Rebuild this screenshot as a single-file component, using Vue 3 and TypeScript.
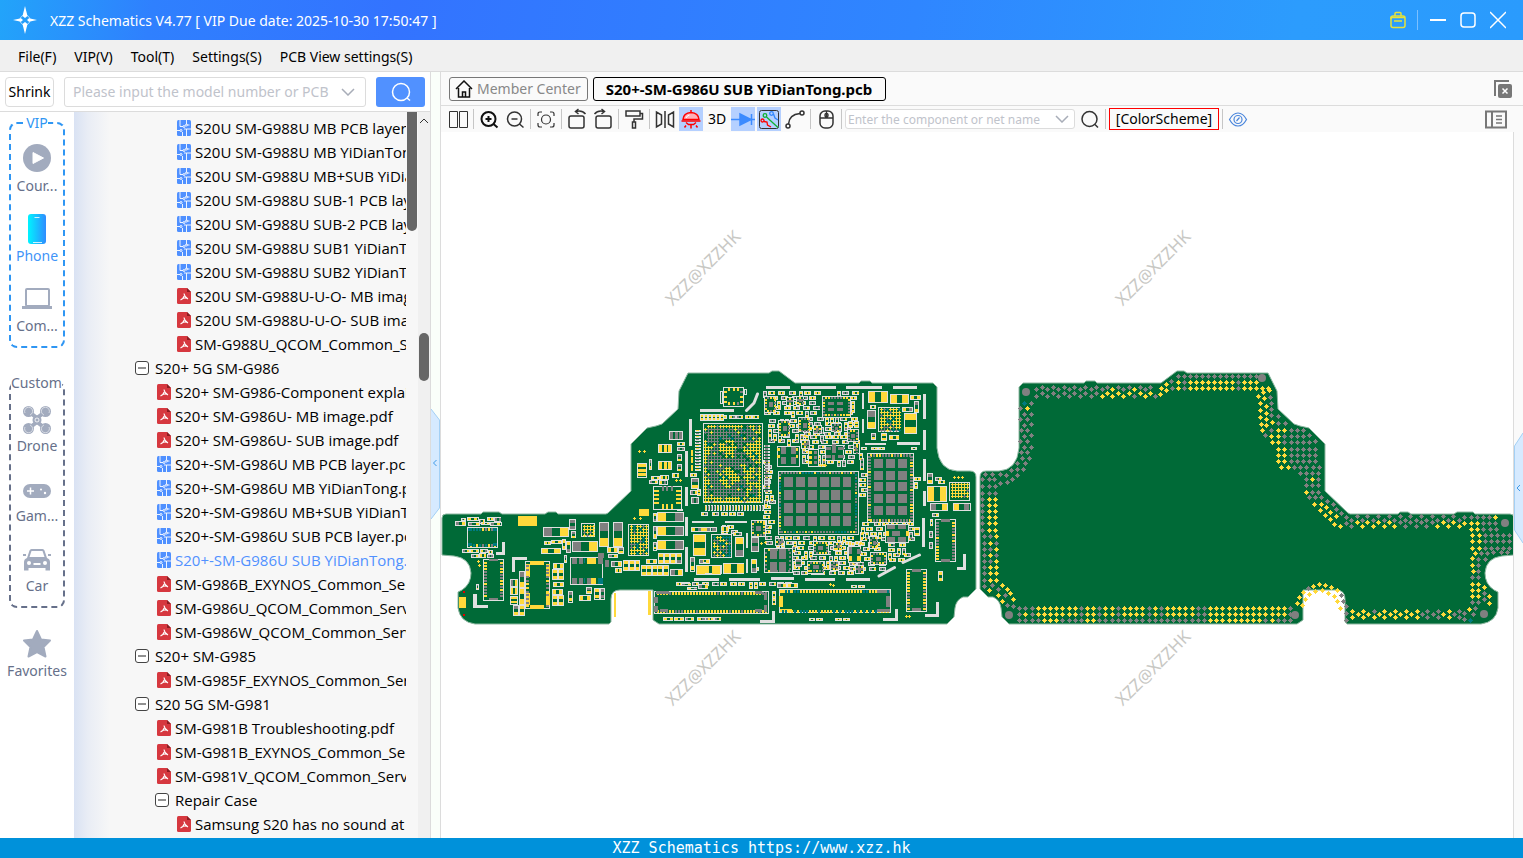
<script setup lang="ts">
import { ref } from 'vue'

type Ink = 'y' | 'g' | 't' | 'w'
interface TreeRow { kind: 'pcb' | 'pdf' | 'group'; depth: number; label: string; active?: boolean }
interface NavItem { icon: string; label: string; active?: boolean }

const keyword = ref('')
const netName = ref('')

const menus = ['File(F)', 'VIP(V)', 'Tool(T)', 'Settings(S)', 'PCB View settings(S)']
const vipItems: NavItem[] = [
  { icon: 'play', label: 'Cour...' },
  { icon: 'phone', label: 'Phone', active: true },
  { icon: 'laptop', label: 'Com...' },
]
const customItems: NavItem[] = [
  { icon: 'drone', label: 'Drone' },
  { icon: 'game', label: 'Gam...' },
  { icon: 'car', label: 'Car' },
]

const row = (kind: TreeRow['kind'], depth: number, label: string, active = false): TreeRow => ({ kind, depth, label, active })
const rows: TreeRow[] = [
  row('pcb', 3, 'S20U SM-G988U MB PCB layer.pcb'),
  row('pcb', 3, 'S20U SM-G988U MB YiDianTong.pcb'),
  row('pcb', 3, 'S20U SM-G988U MB+SUB YiDianTong.pcb'),
  row('pcb', 3, 'S20U SM-G988U SUB-1 PCB layer.pcb'),
  row('pcb', 3, 'S20U SM-G988U SUB-2 PCB layer.pcb'),
  row('pcb', 3, 'S20U SM-G988U SUB1 YiDianTong.pcb'),
  row('pcb', 3, 'S20U SM-G988U SUB2 YiDianTong.pcb'),
  row('pdf', 3, 'S20U SM-G988U-U-O- MB image.pdf'),
  row('pdf', 3, 'S20U SM-G988U-U-O- SUB image.pdf'),
  row('pdf', 3, 'SM-G988U_QCOM_Common_Service.pdf'),
  row('group', 1, 'S20+ 5G SM-G986'),
  row('pdf', 2, 'S20+ SM-G986-Component explain.pdf'),
  row('pdf', 2, 'S20+ SM-G986U- MB image.pdf'),
  row('pdf', 2, 'S20+ SM-G986U- SUB image.pdf'),
  row('pcb', 2, 'S20+-SM-G986U MB PCB layer.pcb'),
  row('pcb', 2, 'S20+-SM-G986U MB YiDianTong.pcb'),
  row('pcb', 2, 'S20+-SM-G986U MB+SUB YiDianTong.pcb'),
  row('pcb', 2, 'S20+-SM-G986U SUB PCB layer.pcb'),
  row('pcb', 2, 'S20+-SM-G986U SUB YiDianTong.pcb', true),
  row('pdf', 2, 'SM-G986B_EXYNOS_Common_Service.pdf'),
  row('pdf', 2, 'SM-G986U_QCOM_Common_Service.pdf'),
  row('pdf', 2, 'SM-G986W_QCOM_Common_Service.pdf'),
  row('group', 1, 'S20+ SM-G985'),
  row('pdf', 2, 'SM-G985F_EXYNOS_Common_Service.pdf'),
  row('group', 1, 'S20 5G SM-G981'),
  row('pdf', 2, 'SM-G981B Troubleshooting.pdf'),
  row('pdf', 2, 'SM-G981B_EXYNOS_Common_Service.pdf'),
  row('pdf', 2, 'SM-G981V_QCOM_Common_Service.pdf'),
  row('group', 2, 'Repair Case'),
  row('pdf', 3, 'Samsung S20 has no sound at all.pdf'),
]

const watermarks = [[703, 268], [1153, 268], [703, 668], [1153, 668]]

/* Board artwork. Part coordinates are in thirds of a drawing unit, relative to a section origin. */
const outline =
  'M442 518Q442 514 446 514H481L483 512H499L502 514H545L548 512H556L558 514H606L608 513L631 491V444L647 428L656 426L662 424L678 409L679 391L688 373H769L772 371H779L795 383H859L861 381H870L872 383H933L937 387V448Q939 470 957 471H970Q976 471 976 477V589L968 597H963Q956 600 955 608L954 617L947 624H659L653 620V590H620Q611 590 611 599V622L609 624H475Q460 622 458 608V592L462 590Q471 584 471 573Q470 558 454 556L442 555Z'

class Layer {
  ox = 0
  back = ''
  frame = ''
  ink: Record<Ink, string> = { w: '', y: '', g: '', t: '' }
  at(ox: number) { this.ox = ox; return this }
  px(x: number) { return this.ox + Math.round(x / 3) }
  py(y: number) { return 360 + Math.round(y / 3) }
  raw(c: Ink, x: number, y: number, w: number, h: number) {
    this.ink[c] += `M${x} ${y}h${w}v${h}h${-w}z`
  }
  rect(c: Ink, x: number, y: number, w: number, h: number) {
    this.raw(c, this.px(x), this.py(y), Math.max(1, Math.round(w / 3)), Math.max(1, Math.round(h / 3)))
  }
  bar(x: number, y: number, w: number, h: number) {
    this.rect('w', x, y, Math.max(w, 9), Math.max(h, 8))
  }
  box(x: number, y: number, w: number, h: number) {
    const s = `M${this.px(x) + 0.5} ${this.py(y) + 0.5}h${Math.round(w / 3) - 1}v${Math.round(h / 3) - 1}h${1 - Math.round(w / 3)}z`
    this.back += s
    this.frame += s
  }
  cap(x: number, y: number, w: number, h: number, c: string) {
    this.box(x, y, w, h)
    const [a, b] = c.split('') as Ink[]
    if (w >= h) {
      const p = Math.max(3, (w - 6) * 0.34)
      this.rect(a, x + 3, y + 3, p, h - 6)
      this.rect(b, x + w - 3 - p, y + 3, p, h - 6)
    } else {
      const p = Math.max(3, (h - 6) * 0.34)
      this.rect(a, x + 3, y + 3, w - 6, p)
      this.rect(b, x + 3, y + h - 3 - p, w - 6, p)
    }
  }
  plus(c: Ink, x: number, y: number) {
    const X = this.px(x), Y = this.py(y)
    this.raw(c, X - 1, Y, 3, 1)
    this.raw(c, X, Y - 1, 1, 3)
  }
  via(c: Ink, x: number, y: number) {
    const X = this.px(x), Y = this.py(y)
    this.raw(c, X - 1, Y - 1, 3, 3)
    this.raw(c, X - 2, Y, 5, 1)
    this.raw(c, X, Y - 2, 1, 5)
  }
}

let seed = 7
const rnd = () => (seed = (seed * 16807) % 2147483647) / 2147483647
const pick = (mix: string) => mix[Math.floor(rnd() * mix.length)] as Ink

function scatter(l: Layer, x: number, y: number, w: number, h: number) {
  for (let cy = y; cy < y + h - 10; cy += 15) {
    let cx = x + Math.floor(rnd() * 8)
    while (cx < x + w - 18) {
      const r = rnd()
      const c = r < 0.45 ? 'yy' : r < 0.75 ? 'gy' : r < 0.9 ? 'yg' : 'gg'
      if (rnd() < 0.3 && cy < y + h - 22) { l.cap(cx, cy, 12, 21, c); cx += 15 }
      else { l.cap(cx, cy, 21, 12, c); cx += 23 + Math.floor(rnd() * 12) }
    }
  }
}

function grid(l: Layer, x: number, y: number, w: number, h: number, step: number, mix: string) {
  l.box(x, y, w, h)
  for (let py = y + 7; py < y + h - 4; py += step)
    for (let px = x + 7; px < x + w - 4; px += step) l.plus(pick(mix), px, py)
}

function pins(l: Layer, x: number, y: number, w: number, h: number, step: number, size: number, sides: string, mix: string) {
  l.box(x, y, w, h)
  if (/[tb]/.test(sides))
    for (let p = x + step; p < x + w - step; p += step) {
      if (sides.includes('t')) l.rect(pick(mix), p, y + 3, 3 + size / 4, size)
      if (sides.includes('b')) l.rect(pick(mix), p, y + h - 3 - size, 3 + size / 4, size)
    }
  if (/[lr]/.test(sides))
    for (let p = y + step; p < y + h - step; p += step) {
      if (sides.includes('l')) l.rect(pick(mix), x + 3, p, size, 3 + size / 4)
      if (sides.includes('r')) l.rect(pick(mix), x + w - 3 - size, p, size, 3 + size / 4)
    }
}

const fine = new Layer().at(700)
const parts = new Layer()

for (const [x, y, w, h] of [
  [190, 92, 176, 84], [310, 172, 165, 62], [200, 178, 130, 84], [300, 225, 185, 98], [405, 92, 75, 80],
  [275, 527, 210, 117], [480, 487, 180, 66], [195, 527, 90, 40], [440, 545, 120, 92], [150, 620, 45, 22],
  [190, 330, 42, 200], [477, 280, 25, 140], [560, 550, 70, 60], [642, 350, 20, 150], [0, 165, 190, 22],
  [0, 455, 150, 22], [-80, 665, 380, 24], [60, 495, 60, 26], [190, 300, 42, 30],
]) scatter(fine, x, y, w, h)

/* Left half of the component side */
const a = parts.at(440)
const leftCaps: [number, number, number, number, string][] = [
  [46, 483, 32, 16, 'gy'], [80, 472, 36, 13, 'yy'], [84, 486, 36, 13, 'gy'], [117, 476, 18, 14, 'gy'], [122, 486, 28, 10, 'yy'],
  [140, 471, 21, 12, 'yy'], [162, 470, 22, 14, 'gg'], [150, 485, 35, 13, 'gy'], [64, 474, 14, 10, 'gy'],
  [66, 568, 24, 11, 'gy'], [90, 568, 28, 12, 'yy'], [120, 568, 24, 12, 'yg'], [145, 570, 15, 12, 'yy'], [92, 582, 24, 12, 'gy'], [118, 580, 22, 14, 'yy'], [140, 582, 20, 13, 'gg'],
  [309, 501, 78, 31, 'gy'], [388, 478, 22, 34, 'gg'], [312, 543, 20, 11, 'yy'], [334, 541, 32, 13, 'yy'], [303, 565, 60, 18, 'yy'],
  [366, 538, 12, 34, 'yy'], [379, 543, 14, 36, 'yg'], [392, 514, 14, 22, 'gy'], [395, 543, 78, 32, 'gy'], [372, 585, 10, 24, 'gy'],
  [478, 485, 31, 75, 'gy'], [520, 485, 31, 75, 'gy'], [501, 562, 32, 18, 'yy'], [503, 582, 30, 13, 'gy'], [533, 562, 18, 20, 'gy'],
  [513, 603, 33, 18, 'gy'], [550, 600, 18, 34, 'yy'], [567, 600, 18, 34, 'yy'], [584, 600, 16, 34, 'yy'], [526, 624, 20, 16, 'yy'],
  [602, 615, 18, 32, 'yy'], [619, 615, 18, 32, 'yy'], [636, 615, 18, 32, 'yy'], [652, 615, 18, 32, 'yy'], [669, 615, 18, 32, 'yy'],
  [655, 579, 18, 34, 'yy'], [673, 579, 18, 34, 'yy'], [690, 579, 18, 34, 'yy'], [708, 579, 18, 34, 'yg'], [690, 628, 38, 20, 'gy'], [619, 597, 34, 14, 'yy'],
  [339, 608, 32, 18, 'yy'], [337, 626, 17, 34, 'yy'], [354, 626, 17, 34, 'yy'], [339, 667, 32, 16, 'yy'], [337, 686, 34, 18, 'yy'], [337, 706, 17, 34, 'yy'], [354, 706, 17, 34, 'yy'],
  [385, 692, 16, 36, 'gy'], [417, 705, 36, 17, 'yy'], [438, 680, 18, 20, 'gy'], [462, 684, 17, 35, 'yy'], [479, 684, 15, 35, 'gg'],
  [210, 656, 24, 24, 'gy'], [210, 682, 24, 24, 'yy'], [210, 708, 24, 26, 'yy'], [237, 633, 17, 50, 'gy'], [237, 684, 17, 50, 'yy'], [219, 736, 18, 34, 'gy'], [237, 736, 18, 34, 'yy'], [108, 673, 8, 18, 'gy'],
  [652, 457, 80, 31, 'yg'], [652, 499, 80, 31, 'yg'], [652, 541, 80, 31, 'yg'], [640, 460, 11, 26, 'yg'], [640, 497, 11, 38, 'gy'], [640, 545, 11, 26, 'gy'],
  [711, 247, 23, 12, 'yy'], [711, 260, 23, 12, 'gg'], [711, 283, 14, 22, 'gy'], [711, 312, 14, 22, 'gy'], [627, 298, 9, 34, 'gy'], [696, 339, 22, 14, 'yy'],
  [632, 347, 28, 12, 'yy'], [660, 344, 26, 14, 'yy'], [628, 361, 28, 12, 'gy'], [657, 360, 26, 14, 'yg'],
  [750, 340, 20, 12, 'yy'], [754, 354, 24, 32, 'gy'], [750, 390, 22, 14, 'gy'], [772, 388, 12, 20, 'yy'], [754, 412, 24, 20, 'gg'],
  [754, 501, 34, 16, 'yg'], [790, 501, 40, 16, 'yg'], [760, 522, 39, 65, 'yy'], [750, 590, 14, 44, 'gy'], [776, 596, 34, 15, 'gy'], [768, 615, 76, 30, 'yy'],
  [724, 670, 30, 10, 'gy'], [742, 680, 30, 10, 'yg'], [775, 672, 30, 14, 'gy'], [670, 772, 30, 12, 'yy'], [702, 772, 30, 12, 'yy'], [734, 772, 28, 12, 'gy'], [774, 772, 22, 12, 'yg'], [796, 772, 28, 12, 'gy'],
]
leftCaps.forEach(c => a.cap(...c))

function tri(x: number, y: number, w: number, h: number, c: Ink, upright: boolean) {
  parts.box(x, y, w, h)
  for (let i = 0; i < 3; i++)
    upright ? parts.rect(c, x + 3 + (i * (w - 3)) / 3, y + 3, 9, h - 6) : parts.rect(c, x + 3, y + 2 + (i * (h - 4)) / 3, w - 6, 9)
}
tri(688, 213, 43, 26, 'g', true)
tri(655, 253, 42, 28, 'y', true)
tri(655, 303, 42, 28, 'y', true)
tri(591, 310, 29, 45, 'y', false)

pins(a, 81, 500, 92, 62, 9, 8, 'tb', 'gyytg')
a.rect('t', 84, 503, 12, 8); a.rect('t', 84, 549, 12, 10); a.rect('t', 158, 503, 12, 8); a.rect('t', 158, 549, 12, 10)
pins(a, 130, 596, 64, 126, 9, 10, 'lr', 'ggyy')
a.rect('g', 147, 596, 28, 7); a.rect('g', 147, 713, 28, 7)
pins(a, 255, 604, 76, 145, 11, 10, 'lr', 'gyg')
a.rect('y', 257, 613, 12, 38); a.rect('y', 318, 613, 12, 38); a.rect('y', 257, 699, 12, 36); a.rect('y', 318, 699, 12, 36)
a.rect('y', 270, 604, 42, 12); a.rect('y', 270, 736, 42, 12)
a.box(391, 592, 100, 84)
for (const y of [594, 655]) {
  a.rect('g', 397, y, 15, 18); a.rect('g', 417, y, 12, 18); a.rect('t', 432, y, 4, 16)
  a.rect(y < 600 ? 'y' : 'g', 441, y, 12, 18); a.rect('y', 453, y, 15, 18); a.rect(y < 600 ? 'g' : 't', 474, y, 15, 18)
}
a.rect('g', 474, 579, 18, 14); a.rect('g', 495, 600, 12, 20)
pins(a, 640, 378, 86, 72, 12, 14, 'lr', 'y')
a.rect('g', 667, 378, 6, 15); a.rect('g', 679, 378, 6, 15); a.rect('g', 692, 378, 6, 15)
for (const x of [667, 679, 692]) a.rect('y', x, 432, 6, 14)
grid(a, 565, 492, 64, 95, 9, 'yyyyyytg')
grid(a, 424, 490, 42, 42, 9, 'yyyg')
a.rect('y', 234, 468, 57, 30); a.rect('y', 597, 447, 30, 20); a.rect('y', 57, 711, 21, 32)
a.rect('y', 522, 699, 6, 72); a.rect('y', 624, 693, 9, 72)
for (const [x, y] of [[598, 274], [613, 274], [709, 361], [721, 361], [583, 475], [601, 475], [115, 604], [118, 616]]) a.plus('y', x, y)
for (let y = 270; y < 330; y += 22) a.rect('y', 753, y, 6, 17)
for (let y = 210; y < 330; y += 9) { a.rect('w', 766, y, 18, 6); a.rect(pick('gyg'), 769, y, 9, 4) }
const leftBars: [number, number, number, number][] = [
  [748, 176, 8, 80], [736, 274, 8, 78], [736, 382, 8, 56], [736, 470, 8, 58], [736, 560, 8, 75], [761, 655, 74, 8],
  [187, 545, 8, 40], [169, 576, 26, 8], [216, 590, 9, 45], [216, 590, 44, 9], [99, 702, 11, 42], [99, 734, 45, 9],
]
leftBars.forEach(r => a.bar(...r))
a.rect('w', 757, 484, 65, 6); a.rect('w', 710, 446, 18, 6); a.rect('w', 724, 432, 4, 20)

/* Right half of the component side */
const b = parts.at(700)
pins(b, 70, 80, 63, 60, 14, 10, 'lrtb', 'yyg')
b.box(61, 93, 9, 38); b.box(133, 88, 9, 18)

/* Ball grid of the main package: rows of balls in coarse patches of signal and ground */
b.box(8, 190, 180, 240)
for (let y = 198; y < 426; y += 9)
  for (let x = 15; x < 184; x += 9) {
    const signal = Math.sin(x / 12 + 1) + Math.cos(y / 14) > 0.35
    const edge = x < 24 || x > 172 || y < 206 || y > 412
    const r = rnd()
    if (r < 0.03) b.plus('t', x, y)
    else if (r < 0.95) b.plus(edge || signal ? pick('yyyyyg') : pick('ggggggy'), x, y)
  }
for (let y = 254; y < 396; y += 9) { b.rect('w', 192, y, 18, 6); b.rect('g', 195, y, 8, 5) }
for (let x = 14; x < 188; x += 9) { b.rect('w', x, 436, 7, 17); b.rect(pick('ggy'), x + 2, 438, 4, 13) }
for (let x = 0; x < 72; x += 12) b.cap(x, 162, 13, 20, 'yy')

function qfn(x: number, y: number, w: number, h: number, mix = 'yg') {
  pins(b, x, y, w, h, 9, 6, 'lrtb', mix)
  b.rect('g', x + w * 0.34, y + h * 0.34, w * 0.32, h * 0.32)
}
qfn(193, 108, 37, 50); qfn(235, 180, 37, 50); qfn(295, 172, 37, 46); qfn(258, 112, 23, 26); qfn(289, 108, 25, 30)
qfn(339, 195, 26, 28); qfn(393, 190, 32, 28); qfn(303, 240, 28, 26); qfn(338, 543, 48, 42); qfn(322, 602, 52, 38)
qfn(510, 577, 50, 38); qfn(153, 480, 46, 50); qfn(226, 534, 28, 25); qfn(400, 545, 28, 28); qfn(389, 604, 28, 30); qfn(465, 616, 28, 26)
qfn(508, 528, 28, 40); qfn(458, 250, 20, 34); qfn(442, 208, 36, 38)
pins(b, 367, 107, 86, 65, 9, 6, 'lrtb', 'yyg')
for (const y of [127, 143]) for (const x of [385, 412]) b.rect('g', x, y, 18, 8)

pins(b, 233, 332, 243, 192, 9, 7, 'lrtb', 'ggggyt')
for (const y of [351, 390, 429, 467]) for (const x of [252, 288, 324, 360, 393, 429]) b.rect('g', x, y, x === 429 ? 24 : 27, 30)
pins(b, 502, 278, 140, 209, 9, 8, 'lrtb', 'gggyy')
for (const y of [297, 333, 367, 402, 438]) for (const x of [522, 558, 594]) b.rect('g', x, y, 27, 27)
pins(b, 192, 565, 86, 76, 12, 7, 'lrtb', 'gy')
for (const y of [567, 606]) for (const x of [210, 237]) b.rect('g', x, y, 21, 31)
b.box(230, 257, 68, 62)
for (const x of [242, 274]) { b.rect('g', x, 262, 15, 20); b.rect('g', x, 290, 15, 22) }
b.rect('y', 232, 264, 8, 10); b.rect('y', 232, 286, 8, 10); b.rect('y', 289, 264, 7, 10); b.rect('y', 289, 286, 7, 10)
b.box(376, 254, 58, 48)
b.rect('g', 397, 252, 11, 28); b.rect('g', 378, 262, 14, 8); b.rect('g', 413, 262, 18, 8); b.rect('g', 378, 284, 14, 8); b.rect('g', 413, 284, 18, 8); b.rect('g', 397, 286, 10, 16)
b.box(323, 266, 32, 54)
for (const y of [272, 288, 304]) { b.rect('y', 326, y, 9, 9); b.rect('g', 342, y, 9, 9) }
b.box(445, 558, 40, 50)
b.rect('g', 448, 560, 10, 22); b.rect('y', 448, 588, 10, 14); b.rect('g', 470, 568, 12, 16); b.rect('y', 470, 588, 12, 14)
b.box(555, 492, 72, 58)
for (const x of [560, 594]) { b.rect('g', x, 494, 24, 12); b.rect('g', x, 532, 24, 14) }
b.rect('g', 576, 512, 24, 15); b.rect('y', 557, 512, 8, 15); b.rect('y', 617, 512, 8, 15)

grid(b, 535, 140, 66, 75, 9, 'yyygt')
grid(b, 748, 366, 64, 56, 9, 'yyyyg')
grid(b, 34, 523, 64, 73, 9, 'yyggt')
const rightCaps: [number, number, number, number, string][] = [
  [504, 94, 60, 36, 'yy'], [570, 102, 58, 29, 'yy'], [630, 106, 34, 14, 'yy'], [502, 150, 26, 56, 'gy'], [613, 160, 40, 63, 'yy'], [642, 123, 16, 36, 'gy'],
  [606, 140, 32, 14, 'yg'], [510, 135, 18, 12, 'yy'], [543, 220, 18, 24, 'yy'], [568, 224, 30, 14, 'yy'], [512, 218, 14, 20, 'gy'],
  [445, 184, 16, 20, 'yy'], [462, 184, 16, 20, 'yy'], [484, 262, 18, 10, 'yy'], [514, 262, 20, 10, 'yy'], [534, 262, 20, 10, 'yy'], [634, 262, 19, 10, 'yy'],
  [682, 377, 61, 48, 'yy'], [682, 340, 19, 34, 'gy'], [704, 350, 22, 12, 'gy'], [714, 361, 22, 12, 'yy'], [690, 430, 54, 25, 'gy'], [758, 430, 54, 25, 'yg'], [696, 459, 20, 11, 'gy'],
  [690, 478, 9, 22, 'yy'], [688, 512, 11, 22, 'gg'], [688, 545, 11, 21, 'gg'], [714, 633, 16, 31, 'yy'], [643, 500, 18, 28, 'yy'],
  [104, 530, 28, 60, 'yg'], [152, 530, 23, 46, 'gg'], [5, 616, 59, 26, 'yy'], [69, 608, 64, 34, 'yy'], [0, 502, 32, 14, 'yg'], [36, 502, 16, 14, 'yg'], [62, 498, 24, 18, 'yy'], [100, 515, 26, 12, 'yg'], [-20, 522, 39, 65, 'yy'],
  [0, 598, 30, 12, 'yy'], [152, 598, 18, 42, 'yg'], [284, 598, 22, 24, 'gg'],
  [216, 692, 12, 24, 'yy'], [216, 714, 12, 22, 'yy'], [262, 668, 34, 14, 'yy'], [230, 670, 30, 14, 'gy'],
  [328, 774, 18, 10, 'yy'], [348, 774, 20, 10, 'yy'], [406, 774, 20, 10, 'yy'], [428, 774, 20, 10, 'yy'], [454, 674, 18, 10, 'yy'], [474, 674, 20, 10, 'yy'],
  [-8, 772, 22, 12, 'yg'], [20, 772, 20, 12, 'yy'], [42, 772, 22, 12, 'gy'],
]
rightCaps.forEach(c => b.cap(...c))

pins(b, 237, 688, 335, 72, 9, 8, 'tb', 'yyyt')
b.rect('y', 240, 690, 36, 9); b.rect('y', 237, 708, 12, 34); b.rect('y', 240, 748, 36, 9)
b.rect('g', 530, 690, 40, 9); b.rect('g', 558, 708, 12, 34); b.rect('g', 530, 748, 40, 9)
pins(b, -138, 692, 344, 70, 9, 8, 'tb', 'yyyyg')
b.rect('g', -132, 694, 38, 8); b.rect('g', -138, 710, 12, 18); b.rect('g', -138, 738, 12, 18); b.rect('g', -120, 748, 24, 8)
b.rect('g', 165, 694, 20, 8); b.rect('g', 192, 698, 10, 22); b.rect('g', 192, 734, 10, 22); b.rect('g', 165, 748, 20, 8)
pins(b, 706, 478, 64, 130, 9, 10, 'lr', 'ggy')
b.rect('g', 723, 478, 27, 8); b.rect('g', 723, 596, 27, 8)
pins(b, 619, 628, 63, 130, 9, 9, 'lr', 'yyg')
b.rect('g', 636, 628, 27, 8); b.rect('g', 636, 745, 27, 8)
for (const [x, y] of [[763, 352], [775, 352], [787, 352], [617, 769], [628, 769], [391, 671], [400, 676], [364, 316], [376, 316], [184, 550], [196, 546], [206, 500]]) b.plus('y', x, y)

const rightBars: [number, number, number, number][] = [
  [197, 79, 73, 8], [303, 79, 105, 8], [437, 79, 108, 8], [580, 79, 72, 8], [0, 148, 101, 8],
  [670, 103, 8, 75], [670, 210, 8, 60], [670, 298, 8, 67], [670, 393, 8, 45], [667, 473, 8, 86], [590, 247, 68, 8],
  [0, 655, 53, 8], [87, 655, 93, 8], [212, 652, 70, 8], [315, 655, 90, 8], [437, 655, 73, 8],
  [790, 583, 8, 45], [770, 621, 28, 8], [708, 725, 10, 45], [675, 762, 43, 8], [584, 748, 9, 34], [549, 773, 44, 8], [216, 752, 9, 36], [180, 780, 45, 8],
]
rightBars.forEach(r => b.bar(...r))
const thinBars: [number, number, number, number][] = [
  [486, 98, 6, 47], [486, 178, 6, 42], [495, 248, 62, 6], [0, 484, 42, 6], [75, 484, 65, 6], [138, 518, 6, 46], [138, 598, 6, 42],
]
thinBars.forEach(r => b.rect('w', ...r))

/* Solder side: rings of ground vias */
const vias = new Layer()
function list(ox: number, spec: string) {
  vias.at(ox)
  for (const token of spec.split(' ')) {
    const [x, y] = token.slice(1).split(',').map(Number)
    vias.via(token[0] as Ink, x, y)
  }
}
function run(ox: number, x: number, y: number, step: number, colors: string) {
  vias.at(ox)
  colors.split('').forEach((c, i) => vias.via(c as Ink, x + i * step, y))
}
run(970, 148, 745, 18.46, 'gggyyyyyyygyygyygyyyygygyyyyyggyyyyyyyyyyyyyg')
run(970, 148, 763, 18.46, 'gygyyyyyyygyygyygyyyygygyyyyyggyyyyyyyyyyyyyg')
run(970, 148, 781, 18.46, 'ggggyyyggggyyggggggggggggggggggyyyyyyyyygyggg')
run(970, 625, 47, 18, 'gggggggggggggg')
run(970, 625, 67, 18, 'ygyyyyyyyygyyy')
run(970, 625, 85, 18, 'ygyyyyyyyygyyyyy')
vias.at(970)
for (let i = 0; i < 22; i++) {
  const x = 199 + i * 16.3
  const lit = i > 12
  if (i % 2) { vias.via('g', x, 82); vias.via(lit ? 'y' : 'g', x, 100) }
  else { vias.via(lit && i % 4 ? 'y' : 'g', x, 88); vias.via(i > 10 && i !== 18 ? 'y' : 'g', x, 109) }
}
list(970, 'g604,64 g607,83 y589,73 y574,83 y589,91 y571,103 g556,109 t163,130 g182,130 g151,145 y172,145 g163,163 g182,163 g151,178 g172,178 g163,196 g182,193 g154,211 g172,211 g163,229 g182,226 g151,244 g172,244 g163,260 g182,260 g154,277 g172,277 g157,295 g178,295 g142,310 g166,310 g124,331 g142,328 g160,328 g109,346 g142,346 g127,358 g91,343 g91,370 g112,367 g46,343 g67,343 g37,358 g58,358 g73,358')
;['ggg', 'ggg', 'gyy', 'gyy', 'gyy', 'gyy', 'gyy', 'gyy'].forEach((c, i) => run(970, 37, 379 + i * 18.5, 18.5, c))
;['ggy', 'gyg', 'ggy', 'gyg', 'ggy', 'gyy', 'gyy', 'gyy'].forEach((c, i) => run(970, 43, 529 + i * 18.5, 18, c))
list(970, 'g43,679 g67,676 y97,676 y58,691 g85,688 y112,688 y85,706 g106,706 y121,700 y97,724 y130,718 g112,736 g130,739')
list(1240, 'y70,97 y88,91 y55,109 y73,115 g91,112 y61,130 g94,130 y79,139 g94,148 y61,151 y79,160 g94,166 g115,169 y61,172 y79,178 y97,187 g115,190 g136,190 y64,193 y79,196 y67,211 g94,211 g76,226 y94,229 y97,247 g208,226 g226,244 y223,433 y244,433 g262,424 g278,433 y241,451 y259,442 y271,457 g289,448 y256,466 y289,469 g304,460 y271,478 y283,493 y301,499 g319,472 g319,490')
;['yyggg', 'ygggg', 'yggggg', 'yyggggg', 'yyggggg', 'yyggggg'].forEach((c, i) => run(1240, 115, 210 + i * 18.5, 18.3, c))
run(1240, 124, 322, 18.8, 'yyggggg')
run(1240, 181, 340, 18, 'gggg')
run(1240, 199, 358, 18, 'gyg')
run(1240, 199, 376, 18, 'ggg')
run(1240, 199, 397, 18, 'ygg')
run(1240, 208, 412, 18, 'ggg')
vias.at(1240)
for (let i = 0; i < 21; i++) {
  const x = 334 + i * 16.1
  const c: Ink = i > 0 && (i < 9 || i > 15) ? 'y' : 'g'
  vias.via('g', x, i % 2 ? 469 : 481)
  vias.via(c, x, i % 2 ? 487 : 499)
}
run(1240, 673, 472, 18.6, 'gggggy')
run(1240, 673, 490, 18.6, 'yyyggg')
run(1240, 692, 508, 19, 'yyggg')
for (const y of [525, 544, 564]) run(1240, 697, y, 18.5, 'yyggggg')
list(1240, 'y706,580 g724,580 g742,580 g760,577 g784,577 g802,577 y697,595 g715,598 g736,598 y697,616 g715,616 y700,634 g715,634 g697,652 g715,652 y697,673 y715,673 y733,682 y697,691 y715,691 g733,700 y697,709 y715,709 y748,709 g733,718 y748,730 g697,727 g715,727 g706,745 y688,748 g700,763 t691,781 g673,778 g673,760')
for (let i = 0; i < 21; i++) {
  vias.at(1240)
  const x = 337 + i * 16.05
  const c: Ink = i < 13 || (i > 16 && i < 19) ? 'y' : 'g'
  if (i % 2) vias.via(c, x, 763)
  else { vias.via(i === 4 ? 'g' : c, x, 752); vias.via(c, x, 771) }
}
list(1240, 'g319,739 g319,760 g319,781 y172,730 y187,736 y178,712 y196,718 y190,697 y208,703 g205,685 y220,679 y226,694 y238,673 y247,691 y256,676 y265,700 y274,682 y283,709 y292,691 y292,724 g304,706 y301,745 g310,724')
const holes = [[1026, 392], [1009, 615], [1262, 378], [1505, 523], [1484, 614], [1295, 615]]
const layers = [fine, parts, vias]
</script>

<template>
  <div class="app">
    <header class="titlebar">
      <svg class="logo" viewBox="0 0 24 28" aria-hidden="true">
        <circle cx="12" cy="14" r="5" fill="none" stroke="#fff" stroke-opacity=".6" />
        <path fill="#fff" d="M12 0L14.500 10L12 12L9.500 10ZM12 28L14.500 18L12 16L9.500 18ZM0 14L8 12.200L10 14L8 15.800ZM24 14L16 12.200L14 14L16 15.800Z" />
      </svg>
      <h1>XZZ Schematics V4.77 [ VIP Due date: 2025-10-30 17:50:47 ]</h1>
      <div class="window-controls">
        <button aria-label="Toolbox"><svg width="16" height="18" viewBox="0 0 16 18" fill="none" stroke="#e6e23a" stroke-width="1.500"><rect x="1" y="5" width="14" height="11.500" rx="2" /><path d="M5 5V2.500Q5 1.500 6 1.500H10Q11 1.500 11 2.500V5M1 8V6.500H15M4 10H12" /></svg></button>
        <span class="rule"></span>
        <button aria-label="Minimize"><svg width="16" height="18" viewBox="0 0 16 18"><path d="M0 9H16" stroke="#fff" stroke-width="2" /></svg></button>
        <button aria-label="Maximize"><svg width="16" height="18" viewBox="0 0 16 18"><rect x="1" y="2" width="14" height="14" rx="3" fill="none" stroke="#fff" stroke-width="1.500" /></svg></button>
        <button aria-label="Close"><svg width="16" height="18" viewBox="0 0 16 18"><path d="M0 1L16 17M16 1L0 17" stroke="#fff" stroke-width="1.500" /></svg></button>
      </div>
    </header>

    <nav class="menubar"><button v-for="m in menus" :key="m">{{ m }}</button></nav>

    <main class="body">
      <aside class="left">
        <form class="search" @submit.prevent>
          <button type="button" class="shrink">Shrink</button>
          <div class="combo">
            <input v-model="keyword" aria-label="Model number" placeholder="Please input the model number or PCB" />
            <button type="button" aria-label="History"><svg width="14" height="8" viewBox="0 0 14 8"><path d="M1 1L7 7L13 1" fill="none" stroke="#a8adb8" stroke-width="1.500" /></svg></button>
          </div>
          <button class="go" aria-label="Search"><svg width="20" height="20" viewBox="0 0 20 20" fill="none" stroke="#fff" stroke-width="1.500"><circle cx="10" cy="10" r="8.500" /><path d="M16 16L19 18.500" /></svg></button>
        </form>

        <div class="columns">
          <nav class="rail">
            <fieldset v-for="(set, n) in [vipItems, customItems]" :key="n" :class="['group', n ? 'custom' : 'vip']">
              <legend>{{ n ? 'Custom' : 'VIP' }}</legend>
              <button v-for="item in set" :key="item.label" :class="['nav', { active: item.active }]">
                <svg width="30" height="32" viewBox="0 0 30 32" aria-hidden="true">
                  <g v-if="item.icon === 'play'"><circle cx="15" cy="16" r="14" fill="#a2abbe" /><path d="M11 10.500V21.500L21.500 16Z" fill="#fff" stroke="#fff" stroke-linejoin="round" /></g>
                  <g v-else-if="item.icon === 'phone'">
                    <defs><linearGradient id="ph"><stop offset="0" stop-color="#00f4ff" /><stop offset="1" stop-color="#2f8cff" /></linearGradient></defs>
                    <rect x="6" y="2" width="18" height="30" rx="3" fill="url(#ph)" /><path d="M12.500 5.500H17.500M11 30.500H20" stroke="#fff" stroke-opacity=".8" />
                  </g>
                  <g v-else-if="item.icon === 'laptop'" fill="none" stroke="#a2abbe" stroke-width="2"><rect x="4" y="7" width="23" height="17" rx="1" /><path d="M0 25.500H30" stroke-width="3" /></g>
                  <g v-else-if="item.icon === 'drone'" fill="#a2abbe">
                    <path d="M6 9L15 16L24 9M6 27L15 20L24 27" stroke="#a2abbe" stroke-width="4" fill="none" />
                    <circle cx="6.500" cy="9.500" r="5.500" /><circle cx="23.500" cy="9.500" r="5.500" /><circle cx="6.500" cy="26.500" r="5.500" /><circle cx="23.500" cy="26.500" r="5.500" />
                    <circle cx="15" cy="18" r="4.500" />
                    <g fill="none" stroke="#fff" stroke-width=".8"><path d="M3 11A4 4 0 1 1 8 13M27 11A4 4 0 1 0 22 13M3 25A4 4 0 1 0 8 23M27 25A4 4 0 1 1 22 23" stroke-opacity=".7" /><circle cx="15" cy="18" r="2" /></g>
                  </g>
                  <g v-else-if="item.icon === 'game'"><rect x="1" y="12" width="28" height="14" rx="7" fill="#a2abbe" /><path d="M5 19H12M8.500 15.500V22.500" stroke="#fff" stroke-width="1.500" /><circle cx="19" cy="17.500" r="1" fill="#fff" /><circle cx="23" cy="21" r="1.200" fill="#fff" /></g>
                  <g v-else transform="translate(0 2)">
                    <path d="M5 14L7.500 6.500Q8 5 9.500 5H20.500Q22 5 22.500 6.500L25 14Q28 15 28 18V26.500H23.500V24H6.500V26.500H2V18Q2 15 5 14Z" fill="#a2abbe" />
                    <path d="M7.500 13L9.500 7H20.500L22.500 13Z" fill="#fff" /><path d="M1 11H4M26 11H29" stroke="#a2abbe" stroke-width="2" />
                    <circle cx="7" cy="19" r="2" fill="#fff" /><circle cx="23" cy="19" r="2" fill="#fff" /><path d="M11.500 20H18.500" stroke="#fff" stroke-width="2" />
                  </g>
                </svg>
                <span>{{ item.label }}</span>
              </button>
            </fieldset>
            <button class="nav favorites">
              <svg width="30" height="32" viewBox="0 0 30 32" aria-hidden="true"><path d="M15 3L19 11.500L28 12.500L21.500 19L23.500 28.500L15 24L6.500 28.500L8.500 19L2 12.500L11 11.500Z" fill="#a2abbe" stroke="#a2abbe" stroke-width="2" stroke-linejoin="round" /></svg>
              <span>Favorites</span>
            </button>
          </nav>

          <div class="tree-pane">
            <ul class="tree">
              <li v-for="r in rows" :key="r.label" :class="['row', 'd' + r.depth, { folder: r.kind === 'group', active: r.active }]">
                <svg v-if="r.kind === 'group'" width="14" height="16" viewBox="0 0 14 16"><rect x=".5" y="1.500" width="13" height="13" rx="2.500" fill="#fff" stroke="#444" /><path d="M3 8H11" stroke="#222" /></svg>
                <svg v-else-if="r.kind === 'pcb'" width="14" height="16" viewBox="0 0 14 16"><rect width="14" height="16" rx="1.500" fill="#4f90ff" /><g fill="none" stroke="#fff" stroke-width=".9"><path d="M3 0V6.500H6M9.500 0V4.500M10.500 5H12.500M0 10.500H3M9.500 16V9H7M9.500 9H14M5.500 12V16" /><circle cx="7" cy="6.500" r="1" /><circle cx="9.500" cy="5" r="1" /><circle cx="4" cy="10.500" r="1" /></g></svg>
                <svg v-else width="14" height="16" viewBox="0 0 14 16"><path d="M1.500 0H10L14 4V14.500Q14 16 12.500 16H1.500Q0 16 0 14.500V1.500Q0 0 1.500 0Z" fill="#d6383f" /><path d="M10 0L14 4H10Z" fill="#8c1d22" /><path d="M7 5.500Q7.500 9 11 11M7.200 8Q6.500 10.500 3.500 12M5.500 10.500Q7.500 9.700 9.500 10.200" fill="none" stroke="#fff" stroke-width="1.100" /></svg>
                <a href="#">{{ r.label }}</a>
              </li>
            </ul>
            <div class="inner-scroll"><span></span></div>
            <div class="outer-scroll">
              <svg width="10" height="6" viewBox="0 0 10 6"><path d="M1 5L5 1L9 5" fill="none" stroke="#333" /></svg>
              <span></span>
            </div>
          </div>
        </div>
      </aside>

      <div class="splitter">
        <button aria-label="Collapse panel"><svg width="9" height="112" viewBox="0 0 9 112"><path d="M0 1L8.500 12V100L0 111" fill="#d6eaff" stroke="#a3d0f5" /><path d="M5.500 52L2.500 55L5.500 58" fill="none" stroke="#3f9ae8" /></svg></button>
      </div>

      <section class="view">
        <div class="tabs">
          <button class="tab"><svg width="18" height="18" viewBox="0 0 18 18" fill="none" stroke="#111" stroke-width="1.500"><path d="M1 9L9 1L17 9M3.500 8V17H14.500V8M7.500 17V12H10.500V17" /></svg>Member Center</button>
          <button class="tab current">S20+-SM-G986U SUB YiDianTong.pcb</button>
          <button class="close-all" aria-label="Close all"><svg width="18" height="18" viewBox="0 0 18 18"><path d="M1 16V1H15" fill="none" stroke="#777" stroke-width="2" /><rect x="4" y="4" width="14" height="14" rx="2" fill="#777" /><path d="M8.500 8.500L13.500 13.500M13.500 8.500L8.500 13.500" stroke="#fff" stroke-width="1.500" /></svg></button>
        </div>

        <div class="toolbar">
          <button class="tool" aria-label="Split view"><svg viewBox="0 0 24 24" stroke-width="1"><path d="M3.500 4.500H11.500V20.500H3.500ZM13.500 4.500H21.500V20.500H13.500Z" /></svg></button>
          <i></i>
          <button class="tool" aria-label="Zoom in"><svg viewBox="0 0 24 24" stroke="#111" stroke-width="2"><circle cx="11.500" cy="12" r="7" /><path d="M16.500 17L20.500 20.500M8.500 12H14.500M11.500 9V15" /></svg></button>
          <button class="tool" aria-label="Zoom out"><svg viewBox="0 0 24 24"><circle cx="11.500" cy="12" r="7" /><path d="M16.500 17L20.500 20.500M8.500 12H14.500" /></svg></button>
          <i></i>
          <button class="tool" aria-label="Fit"><svg viewBox="0 0 24 24" stroke-width="1.200"><circle cx="12" cy="12.500" r="4.500" /><path d="M4 9V7Q4 5 6 5H8M16 5H18Q20 5 20 7V9M20 16V18Q20 20 18 20H16M8 20H6Q4 20 4 18V16" /></svg></button>
          <i></i>
          <button class="tool" aria-label="Rotate left"><svg viewBox="0 0 24 24"><rect x="4" y="9" width="15" height="12" rx="2" /><path d="M20.500 7Q17 3 11 4.500M13.500 2L10.500 4.500L13.500 7" /></svg></button>
          <button class="tool" aria-label="Rotate right"><svg viewBox="0 0 24 24"><rect x="5" y="9" width="15" height="12" rx="2" /><path d="M3.500 7Q7 3 13 4.500M10.500 2L13.500 4.500L10.500 7" /></svg></button>
          <i></i>
          <button class="tool" aria-label="Paint"><svg viewBox="0 0 24 24"><rect x="4" y="4" width="14" height="5" /><path d="M18 6.500H20.500V12H12V15M10.500 15H13.500V21H10.500Z" /></svg></button>
          <i></i>
          <button class="tool" aria-label="Mirror"><svg viewBox="0 0 24 24"><path d="M3.500 5V20L8.500 17V8ZM12 4V21M20.500 5V20L15.500 17V8Z" /></svg></button>
          <button class="tool on" aria-label="Highlight"><svg viewBox="0 0 24 24" stroke="#f00"><path d="M4 12.500Q4.500 6 12 5.500Q19.500 6 20 12.500ZM12 3V5.500" fill="#ffb0b8" /><path d="M2.500 14H21.500M7 15.500L9.500 17.500H14.500L17 15.500M12 18V21.500M7 18.500L5.500 20.500M17 18.500L18.500 20.500" /><path d="M7 11Q8 8.500 10.500 8" stroke="#fff" stroke-width="1" /></svg></button>
          <button class="tool text">3D</button>
          <button class="tool on" aria-label="Diode"><svg viewBox="0 0 24 24" stroke="#3c8bff"><path d="M0 12.500H24M20.500 7V18" /><path d="M9 7L20 12.500L9 18Z" fill="#3c8bff" /></svg></button>
          <button class="tool on" aria-label="Nets"><svg viewBox="0 0 24 24" stroke-width="1.300"><rect x="2.500" y="3.500" width="19" height="18" rx="2" stroke="#333" stroke-width="1" /><g stroke="#10b030"><circle cx="8" cy="8.500" r="1.800" /><path d="M9.500 10L21 20.500" /></g><g stroke="#2f86ff"><circle cx="14.500" cy="6.500" r="1.800" /><path d="M16.500 7L18 11L21 13" /></g><g stroke="#f00"><circle cx="5.500" cy="13.500" r="1.500" /><path d="M7 14.500L10 15L10.500 18L14 20" /></g></svg></button>
          <button class="tool" aria-label="Curve"><svg viewBox="0 0 24 24"><circle cx="5" cy="19" r="2" /><circle cx="19" cy="6" r="2" /><path d="M5.500 17Q6 7.500 17 6.500" /></svg></button>
          <i></i>
          <button class="tool" aria-label="Mouse"><svg viewBox="0 0 24 24"><rect x="6" y="4" width="13" height="17" rx="5" /><path d="M6 11H19M12.500 4V11M11 7.500Q11 6.500 12.500 6.500T14 7.500V9Q12.500 11 11 9Z" stroke-width="1.300" /></svg></button>
          <i></i>
          <div class="combo small">
            <input v-model="netName" aria-label="Component or net name" placeholder="Enter the component or net name" />
            <button type="button" aria-label="History"><svg width="14" height="8" viewBox="0 0 14 8"><path d="M1 1L7 7L13 1" fill="none" stroke="#a8adb8" stroke-width="1.500" /></svg></button>
          </div>
          <button class="tool" aria-label="Find"><svg viewBox="0 0 24 24"><circle cx="11.500" cy="12" r="7.500" /><path d="M17 17.500L20 20.500" /></svg></button>
          <i></i>
          <button class="scheme">[ColorScheme]</button>
          <i></i>
          <button class="tool" aria-label="Show"><svg viewBox="0 0 24 24" stroke="#4a86dc" stroke-width="1.200"><path d="M3.500 12.500Q7 6 12 6T20.500 12.500Q17 19 12 19T3.500 12.500Z" /><circle cx="12" cy="12.500" r="4" /><path d="M10.500 14L13.500 10.500" /></svg></button>
          <button class="tool side" aria-label="Side panel"><svg viewBox="0 0 24 24" stroke="#777"><path d="M2 4.500H22V20.500H2ZM8 4.500V20.500" stroke-width="2" /><path d="M12 9H18M12 12.500H18M12 16H18" /></svg></button>
        </div>

        <div class="stage-row">
          <div class="stage">
            <svg viewBox="441 132 1072 706" preserveAspectRatio="xMidYMid meet" role="img" aria-label="Circuit board">
              <g class="board"><path :d="outline" /><path :d="outline" transform="translate(1956 0) scale(-1 1)" /></g>
              <g v-for="(l, i) in layers" :key="i" shape-rendering="crispEdges">
                <path :d="l.back" class="core" />
                <path :d="l.frame" class="frame" />
                <path :d="l.ink.w" class="white" />
                <path :d="l.ink.y" class="yellow" />
                <path :d="l.ink.g" class="gray" />
                <path :d="l.ink.t" class="teal" />
              </g>
              <g class="strokes"><path d="M757.500 394L754 403L746.500 410.500M879 576L894.500 567.500M903 562.500L919.500 555" /></g>
              <circle v-for="h in holes" :key="h[0]" :cx="h[0]" :cy="h[1]" r="4" class="gray" />
              <path d="M463 591h2v2h-2zM463 614h2v2h-2z" fill="#e00000" />
              <text v-for="(w, i) in watermarks" :key="'w' + i" :transform="`translate(${w[0]} ${w[1]}) rotate(-45)`" y="6" text-anchor="middle">XZZ@XZZHK</text>
            </svg>
          </div>
          <div class="gutter">
            <button aria-label="Expand panel"><svg width="9" height="112" viewBox="0 0 9 112"><path d="M9 1L.5 14V98L9 111" fill="#d6eaff" stroke="#a3d0f5" /><path d="M6 53L3 56L6 59" fill="none" stroke="#3f9ae8" /></svg></button>
          </div>
        </div>
      </section>
    </main>

    <footer>XZZ Schematics https://www.xzz.hk</footer>
  </div>
</template>

<style>
html, body { margin: 0; height: 100%; }
</style>

<style scoped>
.app { display: flex; flex-direction: column; height: 100vh; overflow: hidden; background: #fff; color: #000; font: 14px/20px "Noto Sans", "Open Sans", sans-serif; }
button, input { font: inherit; color: inherit; margin: 0; padding: 0; border: 0; background: none; outline: 0; }
button { cursor: pointer; flex: none; white-space: nowrap; }
svg { display: block; flex: none; }

.titlebar { display: flex; align-items: center; height: 40px; flex: none; padding: 0 17px 0 13px; color: #fff; background: linear-gradient(100deg, #22a4fa 0, #2f80fe 10%, #3373ff 26%, #2f86ff 60%, #2c9cfd 85%, #2a9bfd 100%); }
.logo { width: 24px; height: 28px; }
h1 { margin: 0 0 0 13px; padding-top: 2px; font: inherit; }
.window-controls { display: flex; align-items: center; gap: 14px; margin-left: auto; }
.rule { width: 1px; height: 20px; background: #7cc0ff; margin: 0 -2px 0 -3px; }

.menubar { display: flex; align-items: center; gap: 18px; height: 29px; flex: none; padding: 2px 18px 0; background: #f0f0f0; border-bottom: 1px solid #dcdcdc; }

.body { display: flex; flex: 1; min-height: 0; }
.left { display: flex; flex-direction: column; width: 430px; flex: none; border-right: 1px solid #dcdcdc; }
.search { display: flex; align-items: center; height: 39px; flex: none; padding: 0 5px; border-bottom: 1px solid #dcdcdc; }
.shrink { width: 49px; height: 30px; border: 1px solid #dcdcdc; border-radius: 4px; margin-right: 10px; }
.combo { display: flex; align-items: center; flex: 1; height: 30px; box-sizing: border-box; padding: 0 10px 0 8px; border: 1px solid #dcdcdc; border-radius: 3px; background: #fff; }
.combo input { flex: 1; min-width: 0; height: 100%; }
.combo input::placeholder { color: #bfc3cb; opacity: 1; }
.go { display: grid; place-items: center; width: 49px; height: 30px; margin-left: 10px; border-radius: 3px; background: #5191ff; }

.columns { display: flex; flex: 1; min-height: 0; }
.rail { display: flex; flex-direction: column; width: 74px; flex: none; box-sizing: border-box; align-items: center; }
.group { display: flex; flex-direction: column; align-items: center; box-sizing: border-box; width: 56px; min-width: 0; height: 236px; margin: 0 0 24px; padding: 8px 0 0; border: 2px dashed #2f96f3; border-radius: 8px; }
.group legend { padding: 0; margin: 0 auto; color: #2f96f3; line-height: 22px; }
.custom { border-color: #66708a; margin-bottom: 20px; }
.custom legend { color: #66708a; margin-left: 0; }
.nav { display: flex; flex-direction: column; align-items: center; width: 64px; height: 70px; color: #66708a; line-height: 20px; gap: 2px; }
.nav.active { color: #3f94f8; }
.favorites { gap: 1px; }

.tree-pane { display: flex; flex: 1; min-width: 0; background: linear-gradient(90deg, #d9e2f3 0, #e9edf5 14px, #f7f7f7 36px); }
.tree { flex: 1; min-width: 0; margin: 0; padding: 4px 0 0; list-style: none; overflow: hidden; font-family: "Open Sans", "Noto Sans", sans-serif; font-size: 15px; }
.row { display: flex; align-items: center; gap: 4px; height: 24px; overflow: hidden; white-space: nowrap; }
.row a { color: inherit; text-decoration: none; }
.row.d2 { padding-left: 83px; }
.row.d3 { padding-left: 103px; }
.row.folder { gap: 6px; padding-left: 61px; }
.row.folder.d2 { padding-left: 81px; }
.row.active { color: #5191ff; }
.inner-scroll { width: 12px; padding-left: 1px; box-sizing: border-box; }
.inner-scroll span { display: block; width: 10px; height: 119px; border-radius: 0 0 5px 5px; background: #666; }
.outer-scroll { display: flex; flex-direction: column; align-items: center; width: 12px; padding-top: 6px; background: #f0f0f0; }
.outer-scroll span { width: 10px; height: 48px; margin-top: 209px; border-radius: 5px; background: #666; }

.splitter { display: flex; align-items: center; width: 9px; flex: none; padding-top: 18px; background: #fafffa; box-sizing: border-box; }
.view { display: flex; flex-direction: column; flex: 1; min-width: 0; border-left: 1px solid #dcdcdc; }
.tabs { display: flex; align-items: center; gap: 5px; height: 33px; flex: none; padding: 0 11px 0 8px; background: #fafafa; border-bottom: 1px solid #dcdcdc; }
.tab { display: flex; align-items: center; gap: 4px; box-sizing: border-box; height: 24px; padding: 0 6px 0 5px; border: 1px solid #777; border-radius: 3px; color: #888; }
.tab.current { padding: 0 13px 0 12px; border-color: #000; color: #000; font-size: 15px; font-weight: 700; line-height: 18px; }
.close-all { margin-left: auto; }
.toolbar { display: flex; align-items: center; gap: 2px; height: 26px; flex: none; padding: 0 15px 0 5px; background: #fafafa; }
.toolbar i { width: 1px; height: 20px; margin: 0 1px; background: #c6c6c6; flex: none; }
.tool { width: 24px; height: 24px; }
.tool svg { width: 24px; height: 24px; fill: none; }
.tool svg:not([stroke]) { stroke: #333; }
.tool svg:not([stroke-width]) { stroke-width: 1.5; }
.tool.on { background: #b5d0ff; }
.side { margin-left: auto; }
.combo.small { flex: none; width: 230px; height: 20px; padding: 0 5px 0 2px; margin-right: 1px; font-size: 12px; }
.scheme { width: 110px; height: 22px; border: 1px solid #f00; }

.stage-row { display: flex; flex: 1; min-height: 0; }
.stage { flex: 1; min-width: 0; border-right: 1px solid #dcdcdc; }
.stage svg { width: 100%; height: 100%; }
.stage text { font-size: 17px; fill: #c8c8c4; }
.board path { fill: #006a37; stroke: #8fb8a2; stroke-width: 1; }
.core { fill: #006a37; }
.frame { fill: none; stroke: #e0e0e0; stroke-width: 1; }
.white { fill: #e0e0e0; }
.yellow { fill: #ffd93b; }
.gray { fill: #808080; }
.teal { fill: #007b80; }
.strokes { fill: none; stroke: #e0e0e0; stroke-width: 3; stroke-linecap: round; }
.gutter { display: flex; align-items: center; width: 9px; flex: none; box-sizing: border-box; padding-top: 6px; background: #fafafa; }

footer { height: 20px; flex: none; background: #0091da; color: #fff; text-align: center; font: 15px/20px "DejaVu Sans Mono", monospace; }
</style>
